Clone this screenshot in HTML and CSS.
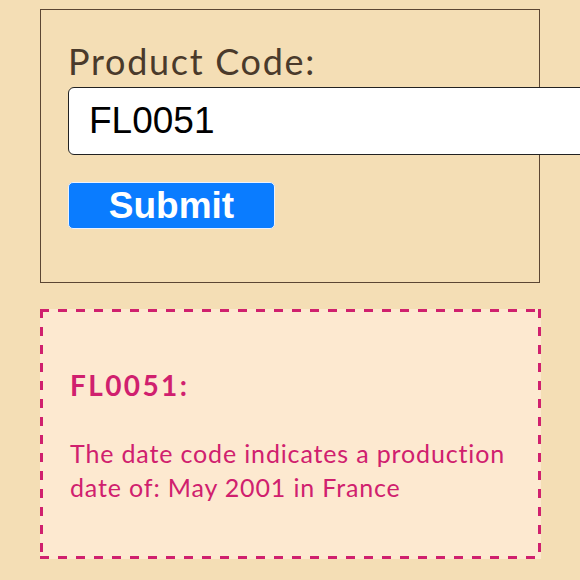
FILE: index.html
```html
<!DOCTYPE html>
<html lang="en">
<head>
<meta charset="utf-8">
<title>Product Code</title>
<link rel="stylesheet" href="styles.css">
</head>
<body>
<div class="page">
  <form class="card" onsubmit="return false">
    <label class="label" for="code">Product Code:</label>
    <input class="input" id="code" type="text" value="FL0051">
    <button class="btn" type="submit">Submit</button>
  </form>
  <div class="result">
    <h2 class="result-title">FL0051:</h2>
    <p class="result-text">The date code indicates a production date of: May 2001 in France</p>
  </div>
</div>
</body>
</html>
```
FILE: styles.css
```css
html, body {
  margin: 0;
  padding: 0;
  background: #f4deb5;
  overflow: hidden;
}
.page {
  padding: 9px 40px 0 40px;
  display: flex;
  flex-direction: column;
  gap: 26px;
}
.card {
  border: 1px solid #5b4633;
  padding: 31px 27px 53px 27px;
  display: flex;
  flex-direction: column;
  align-items: flex-start;
  margin: 0;
}
.label {
  font-family: Lato, "Noto Sans", sans-serif;
  font-size: 36px;
  line-height: 40px;
  letter-spacing: 1.7px;
  color: #4a3a2b;
  margin-bottom: 6px;
}
.input {
  box-sizing: border-box;
  width: 540px;
  height: 68px;
  border: 1px solid #222;
  border-radius: 6px;
  padding: 0 20px;
  background: #fff;
  font-family: "Liberation Sans", Arial, sans-serif;
  font-size: 37px;
  color: #000;
  flex-shrink: 0;
  outline: none;
}
.btn {
  box-sizing: border-box;
  margin-top: 27px;
  width: 207px;
  height: 47px;
  background: #0a7cff;
  border: 1px solid #e9f1ff;
  border-radius: 5px;
  color: #fff;
  font-family: "Liberation Sans", Arial, sans-serif;
  font-weight: bold;
  font-size: 37px;
  line-height: 1;
  padding: 0;
}
.result {
  width: 501px;
  box-sizing: border-box;
  padding: 59px 30px 55px 30px;
  color: #d0206e;
  font-family: Lato, "Noto Sans", sans-serif;
  background:
    repeating-linear-gradient(90deg, #d0206e 0 9px, transparent 9px 18px) left top / 100% 3px no-repeat,
    repeating-linear-gradient(90deg, #d0206e 0 9px, transparent 9px 18px) left bottom / 100% 3px no-repeat,
    repeating-linear-gradient(180deg, #d0206e 0 9px, transparent 9px 18px) left top / 3px 100% no-repeat,
    repeating-linear-gradient(180deg, #d0206e 0 9px, transparent 9px 18px) right top / 3px 100% no-repeat,
    #fde9d0;
}
.result-title {
  margin: 0;
  font-size: 28px;
  line-height: 34px;
  font-weight: 700;
  letter-spacing: 2.4px;
}
.result-text {
  margin: 34px 0 0 0;
  font-size: 25px;
  line-height: 34px;
  letter-spacing: 0.85px;
}
```
